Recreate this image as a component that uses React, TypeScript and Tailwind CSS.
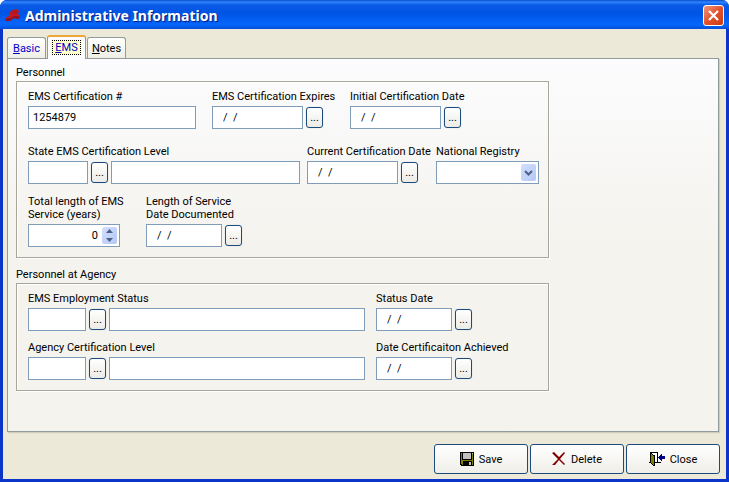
import React, { useState } from "react";
import clsx from "clsx";

const inputClass =
  "h-[23px] border border-[#7f9db9] bg-white text-[11px] text-black outline-none";

function HelmetIcon() {
  return (
    <svg width="16" height="13" viewBox="0 0 16 13" aria-hidden="true">
      <path d="M0 10 2 8 4 7 5 3 8 1 12 0 14 2 13 5 15 7 15 9 12 10 9 9 5 12 1 12Z" fill="#c8181c" />
      <path d="M0 11 3 9 6 9 9 7 12 7 15 8 15 9 12 10 9 9 5 12 1 12Z" fill="#8c1428" />
      <path d="M7 5 9 2M11 1 11 5" stroke="#8c1428" fill="none" />
    </svg>
  );
}

function SaveIcon() {
  return (
    <svg width="14" height="14" viewBox="0 0 14 14" shapeRendering="crispEdges" aria-hidden="true">
      <path d="M0 0H14V14H1L0 13Z" fill="#000" />
      <path d="M1 1H13V13H2L1 12Z" fill="#808000" />
      <path d="M2 0H12V8H2Z" fill="#000" />
      <path d="M3 1H11V7H3Z" fill="#c0c0c0" />
      <path d="M12 1H13V2H12Z" fill="#c0c0c0" />
      <path d="M3 9H12V14H3Z" fill="#000" />
      <path d="M9 10H11V13H9Z" fill="#c0c0c0" />
    </svg>
  );
}

function DeleteIcon() {
  return (
    <svg width="14" height="14" viewBox="0 0 14 14" aria-hidden="true">
      <path d="M0 1 2 0 7 5 12 0 13 1 8 7 13 12 12 13 7 8 3 13 0 13 6 7Z" fill="#800000" />
    </svg>
  );
}

function DoorIcon() {
  return (
    <svg width="16" height="14" viewBox="0 0 16 14" shapeRendering="crispEdges" aria-hidden="true">
      <path d="M1 0H9V11H1Z" fill="#000" />
      <path d="M2 1H8V10H2Z" fill="#fff" />
      <path d="M0 10H2V11H0ZM5 10H12V11H5Z" fill="#000" />
      <path d="M1 0H2V1H3V2H4V3H6V14H4V13H3V12H2V11H1Z" fill="#000" />
      <path d="M2 2H3V3H4V4H5V13H4V12H3V11H2Z" fill="#808000" />
      <path d="M9 5H10V4H11V3H12V2H13V4H16V7H13V9H12V8H11V7H10V6H9Z" fill="#000080" />
    </svg>
  );
}

interface FieldProps {
  id: string;
  label: React.ReactNode;
  children: React.ReactNode;
  className?: string;
}

function Field({ id, label, children, className }: FieldProps) {
  return (
    <div className={clsx("flex flex-col gap-[3px]", className)}>
      <label htmlFor={id} className="whitespace-nowrap">
        {label}
      </label>
      <div className="flex items-center gap-[3px]">{children}</div>
    </div>
  );
}

function LookupButton({ label }: { label: string }) {
  return (
    <button
      type="button"
      aria-label={label}
      className="flex h-[21px] w-[17px] shrink-0 items-end justify-center rounded-[3px] border border-[#1c4a7c] bg-linear-to-b from-white to-[#ecebe4] pb-[3px] text-[11px] leading-[13px] shadow-[0_0_1px_#9fc0dd]"
    >
      ...
    </button>
  );
}

interface DateFieldProps {
  id: string;
  label: React.ReactNode;
  wide?: boolean;
}

function DateField({ id, label, wide }: DateFieldProps) {
  return (
    <Field id={id} label={label} className="w-[122px]">
      <input
        id={id}
        type="text"
        defaultValue={"/  /"}
        className={clsx(inputClass, "pr-1 pl-[10px] whitespace-pre", {
          ["w-[91px]"]: wide,
          ["w-[76px]"]: !wide,
        })}
      />
      <LookupButton label="Pick date" />
    </Field>
  );
}

interface CodeFieldProps {
  id: string;
  label: string;
  className: string;
  codeClassName: string;
}

function CodeField({ id, label, className, codeClassName }: CodeFieldProps) {
  return (
    <Field id={id} label={label} className={className}>
      <input id={id} type="text" className={clsx(inputClass, "px-1", codeClassName)} />
      <LookupButton label="Look up code" />
      <input
        type="text"
        aria-label={`${label} description`}
        className={clsx(inputClass, "min-w-0 flex-1 px-1")}
      />
    </Field>
  );
}

function YearsField() {
  const [years, setYears] = useState(0);

  return (
    <Field
      id="years"
      label={
        <>
          Total length of EMS
          <br />
          Service (years)
        </>
      }
      className="w-[92px]"
    >
      <div className="flex h-[23px] w-[92px] items-center border border-[#7f9db9] bg-white pr-[2px]">
        <input
          id="years"
          type="text"
          inputMode="numeric"
          value={years}
          onChange={(e) => setYears(Number(e.target.value) || 0)}
          className="min-w-0 flex-1 pr-1 text-right text-[11px] outline-none"
        />
        <div className="flex h-[17px] w-[15px] flex-col rounded-[2px] bg-linear-to-br from-[#d3dffd] to-[#b4c8f6]">
          <button
            type="button"
            aria-label="Increase"
            onClick={() => setYears((prev) => prev + 1)}
            className="flex flex-1 items-center justify-center"
          >
            <svg width="7" height="4" viewBox="0 0 7 4" aria-hidden="true">
              <path d="M0 4 3.5 0 7 4Z" fill="#4d6185" />
            </svg>
          </button>
          <button
            type="button"
            aria-label="Decrease"
            onClick={() => setYears((prev) => Math.max(prev - 1, 0))}
            className="flex flex-1 items-center justify-center"
          >
            <svg width="7" height="4" viewBox="0 0 7 4" aria-hidden="true">
              <path d="M0 0H7L3.5 4Z" fill="#4d6185" />
            </svg>
          </button>
        </div>
      </div>
    </Field>
  );
}

function RegistryField() {
  return (
    <Field id="registry" label="National Registry">
      <div className="relative">
        <select
          id="registry"
          defaultValue=""
          className={clsx(inputClass, "block w-[103px] appearance-none pr-5 pl-1")}
        >
          <option value=""></option>
          <option value="yes">Yes</option>
          <option value="no">No</option>
        </select>
        <span className="pointer-events-none absolute top-[3px] right-[3px] flex h-[17px] w-[15px] items-center justify-center rounded-[2px] bg-linear-to-br from-[#d3dffd] to-[#b4c8f6]">
          <svg width="9" height="6" viewBox="0 0 9 6" aria-hidden="true">
            <path d="M1 1 4.5 4.5 8 1" fill="none" stroke="#4d6185" strokeWidth="2" />
          </svg>
        </span>
      </div>
    </Field>
  );
}

function Group({ title, children }: { title: string; children: React.ReactNode }) {
  return (
    <section>
      <h2 className="mb-[2px]">{title}</h2>
      <div className="w-[533px] border border-[#a7a698] pt-2 pr-2 pb-[10px] pl-[11px] shadow-[1px_1px_0_#fff,inset_1px_1px_0_#fff]">
        {children}
      </div>
    </section>
  );
}

const tabs = ["Basic", "EMS", "Notes"];

const actions = [
  { label: "Save", icon: <SaveIcon /> },
  { label: "Delete", icon: <DeleteIcon /> },
  { label: "Close", icon: <DoorIcon /> },
];

export default function App() {
  const [tab, setTab] = useState("EMS");

  return (
    <div className="flex min-h-screen flex-col rounded-t-[7px] bg-[#0a35c8] font-['Roboto','Liberation_Sans',sans-serif] text-[11px] leading-[13px] text-black">
      {/* Title bar */}
      <header className="flex h-[29px] items-center gap-1 rounded-t-[7px] bg-linear-[180deg,#0a48d0_0%,#2f86fb_7%,#0a5ae6_17%,#0054e3_45%,#0566fc_85%,#0450d8_100%] pt-[2px] pr-[5px] pl-[5px]">
        <HelmetIcon />
        <h1 className="flex-1 font-['Noto_Sans','Open_Sans',sans-serif] text-[14px] leading-[20px] font-bold text-white [text-shadow:1px_1px_1px_#0a1883]">
          Administrative Information
        </h1>
        <button
          type="button"
          aria-label="Close window"
          className="flex h-[21px] w-[21px] items-center justify-center rounded-[3px] border border-white bg-linear-to-br from-[#f0957a] via-[#e2512b] to-[#c93a10]"
        >
          <svg width="11" height="11" viewBox="0 0 11 11" aria-hidden="true">
            <path d="M1 1 10 10M10 1 1 10" stroke="#fff" strokeWidth="2.2" />
          </svg>
        </button>
      </header>

      <main className="mx-[3px] mb-[3px] flex flex-1 flex-col bg-[#ece9d8] pt-[6px] pb-[5px]">
        <div role="tablist" className="flex h-[23px] items-end gap-px px-1">
          {tabs.map((name) => (
            <button
              key={name}
              type="button"
              role="tab"
              aria-selected={tab === name}
              onClick={() => setTab(name)}
              className={clsx(
                "flex w-[39px] items-center justify-center rounded-t-[3px] border border-b-0 border-[#919b9c]",
                {
                  ["z-10 -mb-px h-6 border-t-2 border-t-[#eda63a] bg-[#fcfcfe] pb-[2px]"]: tab === name,
                  ["h-[21px] bg-linear-to-b from-white to-[#efeee6]"]: tab !== name,
                  ["text-[#0000c8]"]: name !== "Notes",
                }
              )}
            >
              <span
                className={clsx("border border-dotted px-[2px]", {
                  ["border-black bg-[#ffffcc]"]: tab === name,
                  ["border-transparent"]: tab !== name,
                })}
              >
                <span className="underline">{name[0]}</span>
                {name.slice(1)}
              </span>
            </button>
          ))}
        </div>

        {/* Tab page */}
        <div className="mr-[7px] ml-1 flex flex-1 flex-col gap-[10px] border border-[#919b9c] bg-linear-to-b from-[#fcfcfe] to-[#f4f3ee] to-50% px-2 pt-[7px] shadow-[1px_1px_1px_#cfccbe]">
          <Group title="Personnel">
            <div className="flex gap-4">
              <Field id="cert" label="EMS Certification #">
                <input
                  id="cert"
                  type="text"
                  defaultValue="1254879"
                  className={clsx(inputClass, "w-[168px] px-1")}
                />
              </Field>
              <DateField id="expires" label="EMS Certification Expires" wide />
              <DateField id="initial" label="Initial Certification Date" wide />
            </div>
            <div className="mt-4 flex gap-[7px]">
              <CodeField
                id="level"
                label="State EMS Certification Level"
                className="w-[272px]"
                codeClassName="w-[60px]"
              />
              <DateField id="current" label="Current Certification Date" wide />
              <RegistryField />
            </div>
            <div className="mt-[11px] flex gap-[26px]">
              <YearsField />
              <DateField
                id="service"
                label={
                  <>
                    Length of Service
                    <br />
                    Date Documented
                  </>
                }
              />
            </div>
          </Group>

          <Group title="Personnel at Agency">
            <div className="flex gap-[11px]">
              <CodeField
                id="status"
                label="EMS Employment Status"
                className="w-[337px]"
                codeClassName="w-[58px]"
              />
              <DateField id="statusDate" label="Status Date" />
            </div>
            <div className="mt-[10px] flex gap-[11px]">
              <CodeField
                id="agencyLevel"
                label="Agency Certification Level"
                className="w-[337px]"
                codeClassName="w-[58px]"
              />
              <DateField id="achieved" label="Date Certificaiton Achieved" />
            </div>
          </Group>
        </div>

        <footer className="mt-3 flex justify-end gap-[2px] pr-[6px]">
          {actions.map(({ label, icon }) => (
            <button
              key={label}
              type="button"
              className="flex h-[30px] w-[94px] items-center justify-center gap-[5px] rounded-[3px] border border-[#1c4a7c] bg-linear-to-b from-white to-[#efeee8]"
            >
              {icon}
              {label}
            </button>
          ))}
        </footer>
      </main>
    </div>
  );
}
